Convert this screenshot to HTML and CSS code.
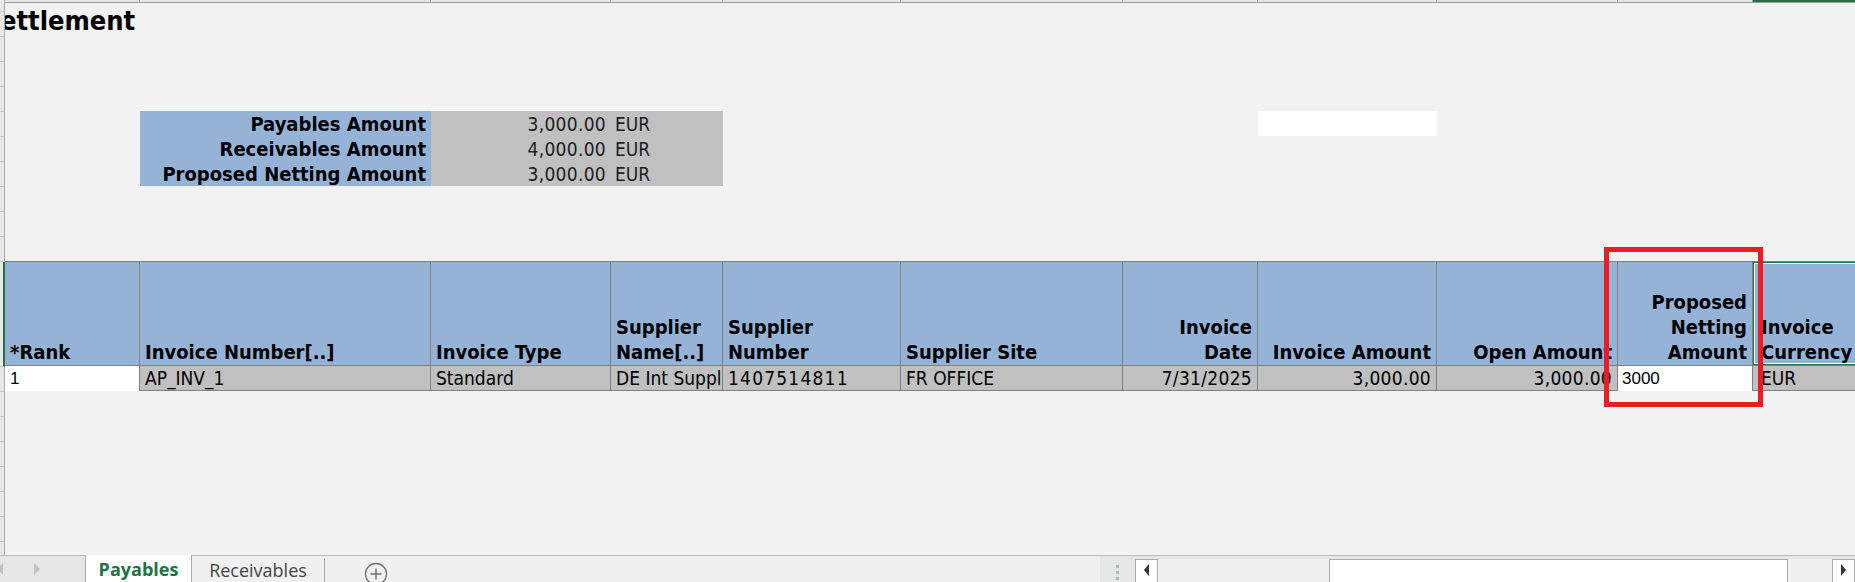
FILE: index.html
```html
<!DOCTYPE html>
<html>
<head>
<meta charset="utf-8">
<link rel="stylesheet" href="styles.css">
</head>
<body>
<div class="app">
  <div class="sheet">
    <div class="rowhdr">
      <div class="rh rh-top"></div>
      <div class="rh"></div><div class="rh"></div><div class="rh"></div><div class="rh"></div><div class="rh"></div>
      <div class="rh"></div><div class="rh"></div><div class="rh"></div><div class="rh"></div><div class="rh"></div>
      <div class="rh rh-hdr"></div>
      <div class="rh"></div>
      <div class="rh"></div><div class="rh"></div><div class="rh"></div><div class="rh"></div><div class="rh"></div><div class="rh"></div>
      <div class="rh rh-rest"></div>
    </div>
    <div class="cells">
      <div class="colhdr cols">
        <span></span><span></span><span></span><span></span><span></span><span></span><span></span><span></span><span></span><span></span><span class="chsel"></span>
      </div>
      <div class="title-row"><div class="title">ettlement</div></div>
      <div class="gap-a"></div>
      <div class="summary cols">
        <div class="blank"></div>
        <div class="lbl">Payables Amount</div>
        <div class="amt">3,000.00</div>
        <div class="cur">EUR</div>
        <div class="blank"></div><div class="blank"></div><div class="blank"></div>
        <div class="whitebox"></div>

        <div class="blank"></div>
        <div class="lbl">Receivables Amount</div>
        <div class="amt">4,000.00</div>
        <div class="cur">EUR</div>

        <div class="blank"></div>
        <div class="lbl">Proposed Netting Amount</div>
        <div class="amt">3,000.00</div>
        <div class="cur">EUR</div>
      </div>
      <div class="gap-b"></div>
      <div class="table cols">
        <div class="th">*Rank</div>
        <div class="th">Invoice Number[..]</div>
        <div class="th">Invoice Type</div>
        <div class="th">Supplier<br>Name[..]</div>
        <div class="th">Supplier<br>Number</div>
        <div class="th">Supplier Site</div>
        <div class="th r">Invoice<br>Date</div>
        <div class="th r">Invoice Amount</div>
        <div class="th r">Open Amount</div>
        <div class="th r">Proposed<br>Netting<br>Amount</div>
        <div class="th sel">Invoice<br>Currency</div>

        <div class="td rank">1</div>
        <div class="td">AP_INV_1</div>
        <div class="td">Standard</div>
        <div class="td">DE Int Supplier</div>
        <div class="td num">1407514811</div>
        <div class="td">FR OFFICE</div>
        <div class="td r">7/31/2025</div>
        <div class="td r">3,000.00</div>
        <div class="td r">3,000.00</div>
        <div class="td edit">3000</div>
        <div class="td curc">EUR</div>
      </div>
    </div>
  </div>

  <div class="tabbar">
    <div class="nav">
      <span class="tri tri-l"></span>
      <span class="tri tri-r"></span>
    </div>
    <div class="tab active">Payables</div>
    <div class="tab">Receivables</div>
    <div class="add">
      <svg width="24" height="24" viewBox="0 0 24 24"><circle cx="12" cy="12" r="10.5" fill="none" stroke="#6f6f6f" stroke-width="1.3"/><path d="M12 6.5v11M6.5 12h11" stroke="#6f6f6f" stroke-width="1.4"/></svg>
    </div>
    <div class="fill"></div>
    <div class="split"><i></i><i></i><i></i></div>
    <div class="hscroll">
      <div class="sbtn"><span class="stri stri-l"></span></div>
      <div class="track"><div class="thumb"></div></div>
      <div class="sbtn"><span class="stri stri-r"></span></div>
    </div>
  </div>

  <div class="redbox"></div>
</div>
</body>
</html>
```

FILE: styles.css
```css
html, body {
  margin: 0;
  padding: 0;
  background: #f2f2f2;
  overflow: hidden;
}

.app {
  position: relative;
  width: 1855px;
  height: 582px;
  overflow: hidden;
  display: flex;
  flex-direction: column;
  background: #f2f2f2;
}

.sheet {
  display: flex;
  height: 555px;
  overflow: hidden;
}

/* row header strip */
.rowhdr {
  width: 5px;
  flex: none;
  display: flex;
  flex-direction: column;
}
.rh {
  height: 24px;
  flex: none;
  background: #e8e8e8;
  border-bottom: 1px solid #c4c4c4;
  border-right: 1px solid #ababab;
  box-sizing: content-box;
}
.rh-top { height: 11px; }
.rh-hdr {
  height: 104px;
  border-right: 2px solid #217346;
}
.rh-rest { flex: 1; border-bottom: none; }

.cells {
  flex: 1;
  min-width: 0;
  overflow: hidden;
  font-family: "DejaVu Sans Condensed", "DejaVu Sans", sans-serif;
  font-stretch: condensed;
  font-size: 19px;
  color: #000;
}

.cols {
  display: grid;
  grid-template-columns: 135px 291px 180px 112px 178px 222px 135px 179px 181px 135px 200px;
}

/* column header remnants at the very top */
.colhdr {
  height: 2px;
  border-bottom: 1px solid #9f9f9f;
  background: #e6e6e6;
}
.colhdr span { border-right: 1px solid #9f9f9f; }
.chsel { background: #217346; }

.title-row {
  height: 34px;
  overflow: hidden;
}
.title {
  font-size: 27px;
  font-weight: bold;
  line-height: 35px;
  margin-left: -5px;
  white-space: nowrap;
}

.gap-a { height: 74px; }
.gap-b { height: 75px; }

/* summary block */
.summary {
  grid-auto-rows: 25px;
  line-height: 26px;
  white-space: nowrap;
}
.summary .lbl {
  grid-column: 2;
  background: #95b3d7;
  font-weight: bold;
  font-size: 20px;
  text-align: right;
  padding-right: 5px;
}
.summary .amt {
  grid-column: 3;
  background: #c0c0c0;
  text-align: right;
  padding-right: 5px;
  color: #1e1e1e;
  letter-spacing: 0.3px;
}
.summary .cur {
  grid-column: 4;
  background: #c0c0c0;
  padding-left: 4px;
  color: #1e1e1e;
}
.summary .whitebox {
  grid-column: 8;
  background: #fff;
}

/* table */
.table {
  grid-template-rows: 105px 25px;
  white-space: nowrap;
}
.th {
  background: #95b3d7;
  border-top: 1px solid #808080;
  border-right: 1px solid #808080;
  border-bottom: 1px solid #808080;
  font-weight: bold;
  font-size: 20px;
  line-height: 25px;
  padding: 0 4px 0 5px;
  display: flex;
  flex-direction: column;
  justify-content: flex-end;
  overflow: hidden;
}
.th.r { text-align: right; padding-right: 5px; }
.th.sel {
  position: relative;
  padding-left: 8px;
  border-right: none;
}
.th.sel::after {
  content: "";
  position: absolute;
  left: -1px;
  top: -1px;
  right: -3px;
  bottom: -1px;
  border: 2px solid #217346;
  box-shadow: inset 0 0 0 1px #fff;
}

.td {
  background: #c0c0c0;
  border-right: 1px solid #808080;
  border-bottom: 1px solid #808080;
  line-height: 25px;
  padding: 0 4px 0 5px;
  overflow: hidden;
}
.td.num { letter-spacing: 1.2px; }
.td.r { text-align: right; padding-right: 5px; padding-left: 0; overflow: visible; letter-spacing: 0.3px; }
.td.rank {
  background: #fff;
  border-bottom: none;
  font-family: "Liberation Sans", Arial, sans-serif;
  font-size: 17px;
  padding-left: 5px;
}
.td.edit {
  background: #fff;
  border-bottom: none;
  font-family: "Liberation Sans", Arial, sans-serif;
  font-size: 17px;
  padding-left: 4px;
}
.td.curc { padding-left: 8px; border-right: none; }

/* sheet tabs */
.tabbar {
  height: 26px;
  border-top: 1px solid #bcbcbc;
  display: flex;
  background: #f0f0f0;
  font-family: "Open Sans", "Noto Sans", sans-serif;
  font-size: 18px;
  line-height: 26px;
}
.nav {
  width: 85px;
  flex: none;
  background: #e6e6e6;
  position: relative;
  display: flex;
  align-items: center;
}
.tri {
  width: 0;
  height: 0;
  border-top: 6px solid transparent;
  border-bottom: 6px solid transparent;
}
.tri-l {
  border-right: 6px solid #c2c2c2;
  margin-left: -3px;
}
.tri-r {
  border-left: 6px solid #c2c2c2;
  margin-left: 31px;
}
.tab {
  flex: none;
  color: #444;
  text-align: center;
  position: relative;
}
.tab.active {
  width: 105px;
  background: #fff;
  color: #217346;
  font-weight: 700;
  border-left: 1px solid #ababab;
  border-right: 1px solid #ababab;
  margin-top: -1px;
  height: 27px;
  line-height: 29px;
}
.tab:not(.active) {
  width: 132px;
  border-right: 1px solid #ababab;
  margin-top: 3px;
  line-height: 23px;
}
.add {
  flex: none;
  margin-left: 39px;
  padding-top: 6px;
  height: 20px;
}
.add svg { display: block; }
.fill { flex: 1; }
.split {
  width: 35px;
  flex: none;
  background: #e6e6e6;
  display: flex;
  flex-direction: column;
  align-items: flex-start;
  padding-left: 16px;
  padding-top: 9px;
  box-sizing: border-box;
  gap: 3px;
}
.split i {
  display: block;
  width: 3px;
  height: 3px;
  background: #a9bdb2;
}
.hscroll {
  width: 720px;
  flex: none;
  display: flex;
  padding-top: 3px;
  background: #e6e6e6;
}
.sbtn {
  width: 21px;
  flex: none;
  border: 1px solid #ababab;
  border-bottom: none;
  background: #fff;
  display: flex;
  align-items: center;
  justify-content: center;
  padding-bottom: 2px;
}
.stri {
  width: 0;
  height: 0;
  border-top: 6px solid transparent;
  border-bottom: 6px solid transparent;
}
.stri-l { border-right: 5px solid #333; }
.stri-r { border-left: 5px solid #333; }
.track {
  flex: 1;
  background: #f0f0f0;
  position: relative;
}
.thumb {
  margin-left: 171px;
  width: 457px;
  height: 100%;
  background: #fff;
  border: 1px solid #ababab;
  border-bottom: none;
}

/* annotation */
.redbox {
  position: absolute;
  left: 1604px;
  top: 247px;
  width: 159px;
  height: 160px;
  box-sizing: border-box;
  border: 5px solid #ec1c24;
}
```
